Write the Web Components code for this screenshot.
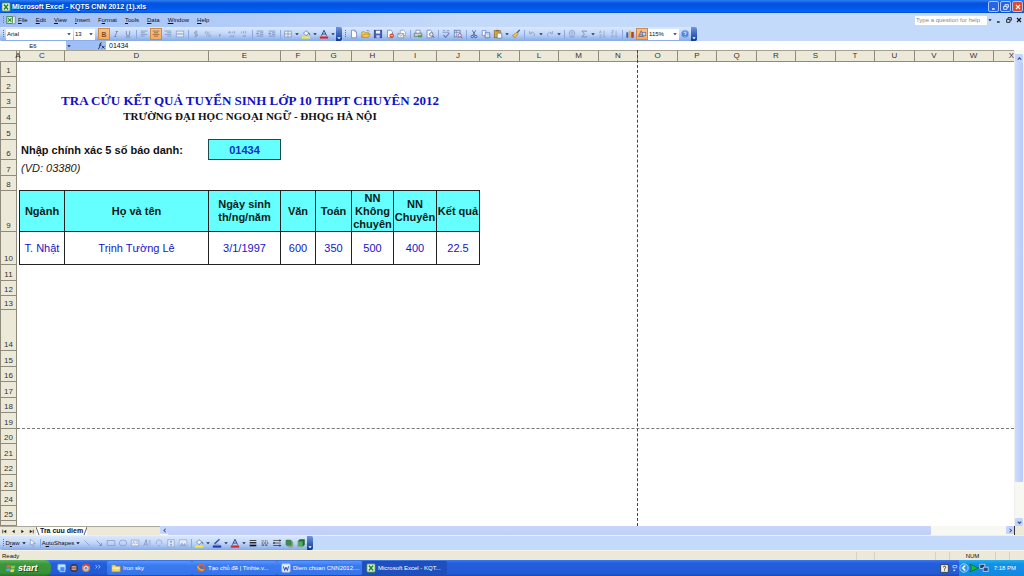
<!DOCTYPE html>
<html lang="vi">
<head>
<meta charset="utf-8">
<title>Microsoft Excel - KQTS CNN 2012 (1).xls</title>
<style>
  html, body { margin: 0; height: 100%; }
  body { font-family: "Liberation Sans", Arial, sans-serif; font-size: 6px; color: #111; background: #fff; overflow: hidden; }
</style>
</head>
<body>
<excel-app></excel-app>
<script>
const ICONS = {
  excel: '<rect x="1" y="1" width="10" height="10" rx="1" fill="#e8f3e4" stroke="#2c7a34"/><path d="M3.5 3l5 6M8.500 3l-5 6" stroke="#1b8a2c" stroke-width="1.800"/>',
  book: '<rect x="1" y="2" width="7" height="8" fill="#dff0dc" stroke="#2c7a34"/><path d="M2.500 4l4 4M6.500 4l-4 4" stroke="#1b8a2c" stroke-width="1.300"/><path d="M9 1.500h2v9H8" fill="#fff" stroke="#4a66a8" stroke-width=".8"/>',
  bold: '<text x="6" y="9" text-anchor="middle" font-size="8" font-weight="bold" fill="#7a5426">B</text>',
  italic: '<path d="M5.500 3h3M3.500 9h3M7 3L5 9" stroke="#6f83ad" stroke-width="1"/>',
  underline: '<path d="M4 2.500v3.500q0 2 2 2t2-2V2.500M3 9.700h6" fill="none" stroke="#6f83ad" stroke-width="1"/>',
  left: '<path d="M2 2.500h8M2 4.500h5M2 6.500h8M2 8.500h5" stroke="#7f95c4" stroke-width="1"/>',
  center: '<path d="M2 2.500h8M3.500 4.500h5M2 6.500h8M3.500 8.500h5" stroke="#8a6a45" stroke-width="1"/>',
  right: '<path d="M2 2.500h8M5 4.500h5M2 6.500h8M5 8.500h5" stroke="#7f95c4" stroke-width="1"/>',
  merge: '<rect x="1.500" y="2.500" width="9" height="7" fill="#e6eefb" stroke="#8b9fcb" stroke-width=".9"/><path d="M1.500 6h2.500M8 6h2.500M5 6h2M4.500 5v2M7.500 5v2" stroke="#7088bb" stroke-width=".8"/>',
  dollar: '<path d="M8 3.500H5.500q-1.500 0-1.500 1.200T5.500 6h1q1.500 0 1.500 1.200T6.500 8.500H4M6 2v8" fill="none" stroke="#7d93c2" stroke-width=".9"/>',
  percent: '<circle cx="4" cy="4.500" r="1.400" fill="none" stroke="#8aa0cc" stroke-width=".9"/><circle cx="8" cy="8" r="1.400" fill="none" stroke="#8aa0cc" stroke-width=".9"/><path d="M8 3L4 9.500" stroke="#8aa0cc" stroke-width=".8"/>',
  comma: '<path d="M6 6v1.500L5 9" stroke="#7d93c2" stroke-width="1.300" fill="none"/>',
  incdec: '<path d="M2 4h3M3.500 2.500L2 4l1.500 1.500M7 3v2M9 2.500v3M4 8v2M6 7.500v2.500M8 7.500v2.500" stroke="#8296c4" stroke-width=".9" fill="none"/>',
  decdec: '<path d="M3 3v2M5.500 2.500v3M8 2.500v3M4 8.500h4M6.500 7L8 8.500 6.500 10" stroke="#8296c4" stroke-width=".9" fill="none"/>',
  outdent: '<path d="M2 2.500h8M6 4.500h4M6 6.500h4M2 8.500h8M5 5.500H2M3.500 4L2 5.500 3.500 7" stroke="#7288bb" stroke-width=".9" fill="none"/>',
  indent: '<path d="M2 2.500h8M6 4.500h4M6 6.500h4M2 8.500h8M1.500 5.500h3M3 4l1.500 1.500L3 7" stroke="#7288bb" stroke-width=".9" fill="none"/>',
  borders: '<path d="M2 2.500h8v7H2zM6 2.500v7M2 6h8" stroke="#7e8fb4" stroke-width=".9" fill="#e9f0fc"/>',
  fill: '<path d="M3 5l3-3 3.500 3L6 8z" fill="#f2f5fa" stroke="#55668c" stroke-width=".8"/><path d="M9.500 4.500q1.500 1.500 1 3" stroke="#3b5fae" fill="none"/><path d="M1 9h10v2.500H1z" fill="#f5ee2e"/>',
  line: '<path d="M3 7L9 1.500" stroke="#2c56b4" stroke-width="1.800"/><path d="M2 7.500h7" stroke="#7b8db8" stroke-width=".8"/><path d="M1 9h10v2.500H1z" fill="#1838b0"/>',
  fontcolor: '<path d="M3 8l3-6.500L9 8M4 6h4" fill="none" stroke="#3a4f8c" stroke-width="1.200"/><path d="M1 9h10v2.500H1z" fill="#e0211c"/>',
  newdoc: '<path d="M3 1.500h4l2 2v7H3z" fill="#fff" stroke="#6d80ad" stroke-width=".9"/><path d="M7 1.500v2h2" fill="none" stroke="#6d80ad" stroke-width=".7"/>',
  open: '<path d="M1 10V3.500h3.500l1 1H9V6" fill="#f7dd76" stroke="#a87e1c" stroke-width=".8"/><path d="M1 10l2-4h8l-2 4z" fill="#f4c844" stroke="#a87e1c" stroke-width=".8"/><path d="M7 2q2-1 3 1" stroke="#3c62b4" fill="none" stroke-width=".8"/>',
  save: '<rect x="1.500" y="1.500" width="9" height="9" fill="#4561ba" stroke="#2a3c86" stroke-width=".8"/><rect x="3.500" y="2" width="5" height="3.500" fill="#eef2fb"/><rect x="4" y="7.500" width="4" height="3" fill="#c8d2ea"/>',
  perm: '<path d="M3 1.500h4l2 2v7H3z" fill="#fff" stroke="#6d80ad" stroke-width=".9"/><circle cx="8" cy="8" r="2.700" fill="#d8442e"/><path d="M6.500 8h3" stroke="#fff"/>',
  mail: '<path d="M4 1.500h4l2 2V8H4z" fill="#fff" stroke="#7d90b8" stroke-width=".8"/><path d="M1 5.500h7v5H1z" fill="#f4f1df" stroke="#7d8398" stroke-width=".8"/><path d="M1 5.500l3.500 3L8 5.500" fill="none" stroke="#7d8398" stroke-width=".7"/>',
  print: '<path d="M3.500 5V1.500h5V5" fill="#fff" stroke="#6d7893" stroke-width=".8"/><path d="M1.500 5h9v4h-9z" fill="#c6ccc8" stroke="#5c6878" stroke-width=".8"/><path d="M6 7.500h5v2.500H6z" fill="#49a04b"/>',
  preview: '<path d="M2.500 1.500h4l2 2v7h-6z" fill="#fff" stroke="#6d80ad" stroke-width=".9"/><circle cx="7.500" cy="6.500" r="2.200" fill="#dcebf8" stroke="#5a6a86" stroke-width=".9"/><path d="M9 8l2 2.500" stroke="#735c3a" stroke-width="1.200"/>',
  spell: '<path d="M2 2h3M7 2h3M2 4h8" stroke="#7e90bd"/><path d="M3 7l2.500 3L10 5" fill="none" stroke="#5f7dc4" stroke-width="1.300"/>',
  research: '<rect x="1.500" y="1.500" width="7" height="8" fill="#dfe6f7" stroke="#6074b0" stroke-width=".9"/><path d="M4 1.500v8M1.500 4h7" stroke="#6074b0" stroke-width=".7"/><circle cx="8" cy="7.500" r="2" fill="#f3e9e9" stroke="#84507a" stroke-width=".9"/><path d="M9.500 9l1.500 2" stroke="#84507a"/>',
  cut: '<path d="M4 1.500L7.500 8M8 1.500L4.500 8" stroke="#4e6296" stroke-width="1"/><circle cx="4" cy="9" r="1.500" fill="none" stroke="#3257ad" stroke-width="1"/><circle cx="8" cy="9" r="1.500" fill="none" stroke="#3257ad" stroke-width="1"/>',
  copy: '<path d="M1.500 2h4.500v6H1.500z" fill="#fff" stroke="#6480bd" stroke-width=".9"/><path d="M5 4.500h5.500v6H5z" fill="#eef4ff" stroke="#4966ab" stroke-width=".9"/><path d="M6.500 6.500h3M6.500 8.500h3" stroke="#7c94ca" stroke-width=".6"/>',
  paste: '<rect x="1.500" y="2" width="7.500" height="8.500" fill="#dba53d" stroke="#86621f" stroke-width=".8"/><rect x="3.500" y="1" width="3.500" height="2" fill="#87724a"/><path d="M5 5h5.500v6H5z" fill="#fff" stroke="#53689e" stroke-width=".8"/>',
  painter: '<path d="M10.500 1L7 5" stroke="#3b5ba4" stroke-width="1.600"/><path d="M7 4l1.500 1.500L5 10.500 1.500 8z" fill="#efc64e" stroke="#94742a" stroke-width=".7"/>',
  undo: '<path d="M3 5.500q4-3.500 6 0 .5 2-1 3.500M3 2.500v3h3" fill="none" stroke="#93a9d6" stroke-width="1.100"/>',
  redo: '<path d="M9 5.500q-4-3.500-6 0-.5 2 1 3.500M9 2.500v3H6" fill="none" stroke="#93a9d6" stroke-width="1.100"/>',
  link: '<circle cx="6" cy="5" r="3.500" fill="#c0d1ef" stroke="#8fa4d0" stroke-width=".9"/><path d="M3 9.500h6" stroke="#8fa4d0" stroke-width="1.500"/><path d="M2.500 5h7M6 1.500v7" stroke="#8fa4d0" stroke-width=".6"/>',
  sigma: '<path d="M9 3.500V2.500H3.500L6.500 6 3.500 9.500H9V8.500" fill="none" stroke="#7187b8" stroke-width="1"/>',
  sorta: '<path d="M3 5l1-3 1 3M3 7h2.500L3 10h2.500M8.500 2v8M7 8.500L8.500 10 10 8.500" fill="none" stroke="#8da2cf" stroke-width=".9"/>',
  sortz: '<path d="M3 2h2.500L3 5h2.500M3 10l1-3 1 3M8.500 2v8M7 8.500L8.500 10 10 8.500" fill="none" stroke="#8da2cf" stroke-width=".9"/>',
  chart: '<path d="M1.500 4h2.500v6.500H1.500z" fill="#3764bf"/><path d="M4.500 2h2.500v8.500H4.500z" fill="#e7b43a"/><path d="M7.500 3.500h3v7h-3z" fill="#b33d33"/>',
  drawing: '<path d="M2 9l3-7 3 7zM3 7h4" fill="none" stroke="#5a6ca3" stroke-width="1"/><rect x="6.500" y="4" width="4" height="4" fill="#c9d7f4" stroke="#6674a6" stroke-width=".8"/>',
  help: '<circle cx="6" cy="6" r="4.500" fill="#4f82dd" stroke="#8fb1ee"/><path d="M4.700 5q0-1.500 1.300-1.500T7.300 5 6 6.500v.8M6 8.300v.8" fill="none" stroke="#fff" stroke-width="1"/>',
  fx: '<path d="M1.500 10.500q1.500 0 2-3l.8-3.500q.5-2 2-1.800M3 5.500h3M6.500 6.500L10 10M10 6.500L6.500 10" fill="none" stroke="#13244f" stroke-width="1.200"/>',
  pointer: '<path d="M4 1.500v7.500l2-2 1.500 3.500 1.200-.6L7.300 6.500H10z" fill="#f4f7fd" stroke="#7185b4" stroke-width=".7"/>',
  sline: '<path d="M3 3l6 6" stroke="#8599c6" stroke-width=".9"/>',
  arrow: '<path d="M3 3l6 6M9 6v3H6" fill="none" stroke="#7286b8" stroke-width=".9"/>',
  rect: '<path d="M1.500 3h9v6h-9z" fill="none" stroke="#8599c6" stroke-width=".9"/>',
  oval: '<ellipse cx="6" cy="6" rx="4.500" ry="3.500" fill="none" stroke="#8599c6" stroke-width=".9"/>',
  textbox: '<path d="M1.500 2.500h9v7h-9z" fill="#e8effb" stroke="#8599c6" stroke-width=".8"/><path d="M3 7.500l1.500-3.500L6 7.500M7 4.500h2.500M7 6.500h2.500" fill="none" stroke="#8599c6" stroke-width=".7"/>',
  wordart: '<path d="M2 10l3-8 1.500 8M3 7.500h3" fill="none" stroke="#8da0ca" stroke-width="1.200"/><path d="M8 2l2.500 1v7L8 9z" fill="#a9bce2"/>',
  diagram: '<circle cx="6" cy="6" r="3.500" fill="none" stroke="#92a7d4"/><circle cx="6" cy="2.500" r="1.500" fill="#b8c9ea"/><circle cx="3" cy="8.500" r="1.500" fill="#b8c9ea"/><circle cx="9" cy="8.500" r="1.500" fill="#b8c9ea"/>',
  clipart: '<path d="M2 2h8v8.500H2z" fill="#dce6f8" stroke="#8da2d0" stroke-width=".8"/><circle cx="6" cy="4.500" r="1.300" fill="#8da2d0"/><path d="M4 9q2-4 4 0z" fill="#8da2d0"/>',
  pic: '<path d="M1.500 2h9v8h-9z" fill="#e0eafa" stroke="#8fa4d2" stroke-width=".8"/><path d="M2 9.500l2.500-4 2 2.500L8 6l2.500 3.500z" fill="#96aad6"/>',
  weight: '<path d="M2 3h8" stroke="#111" stroke-width=".9"/><path d="M2 5.700h8" stroke="#111" stroke-width="1.500"/><path d="M2 9h8" stroke="#111" stroke-width="2"/>',
  dash: '<path d="M2 3.500h8" stroke="#222" stroke-dasharray="1 1"/><path d="M2 6h8" stroke="#222" stroke-dasharray="2 1"/><path d="M2 8.500h8" stroke="#222" stroke-dasharray="3 1"/>',
  arrows: '<path d="M1.500 3h9M1.500 6h9M1.500 9h9" stroke="#222" stroke-width=".8"/><path d="M9 1.500L11 3 9 4.500M3 4.500L1 6l2 1.500M9 7.500L11 9 9 10.500" fill="#222"/>',
  shadow: '<rect x="4" y="4" width="7" height="7" rx="1" fill="#8b9b8c"/><rect x="2" y="2" width="7" height="7" rx="1" fill="#3a8a4c"/>',
  threed: '<path d="M2 4l2.500-2.500h6V8L8 10.500z" fill="#1f6a31"/><path d="M2 4h6v6.500H2z" fill="#57a863"/>',
  min: '<path d="M3 9h4" stroke="currentColor" stroke-width="2"/>',
  restore: '<path d="M4.500 4.500V2.500h5v4H8M2.500 5h5v4.500h-5z" fill="none" stroke="currentColor" stroke-width="1.300"/>',
  close: '<path d="M3 3l6 6M9 3L3 9" stroke="currentColor" stroke-width="1.600"/>',
  down: '<path d="M2.500 4.500h7L6 8.500z" fill="currentColor"/>',
  chevup: '<path d="M3 8l3-3 3 3" fill="none" stroke="#34508f" stroke-width="2"/>',
  chevdown: '<path d="M3 4.500l3 3 3-3" fill="none" stroke="#34508f" stroke-width="2"/>',
  chevleft: '<path d="M8 3L5 6l3 3" fill="none" stroke="#34508f" stroke-width="1.800"/>',
  chevright: '<path d="M4.500 3l3 3-3 3" fill="none" stroke="#34508f" stroke-width="1.800"/>',
  first: '<path d="M3 3v6" stroke="#222" stroke-width="1.400"/><path d="M9 3v6L4.500 6z" fill="#222"/>',
  prev: '<path d="M8 3v6L3.500 6z" fill="#222"/>',
  next: '<path d="M4 3v6l4.500-3z" fill="#222"/>',
  last: '<path d="M9 3v6" stroke="#222" stroke-width="1.400"/><path d="M3 3v6l4.500-3z" fill="#222"/>',
  windows: '<path d="M1 3q2-1.500 4.500-.3L5 6Q3 5 .500 6z" fill="#f0603a"/><path d="M6.300 3q2 1 4.700 0L10.300 6.200Q8 7 5.700 6.200z" fill="#86cf4a"/><path d="M.500 7Q3 6 5 7l-.6 3.200Q2 9 0 10z" fill="#5aa0f4"/><path d="M5.600 7.200q2.300 1 4.500 0L9.400 10.500q-2.200 1-4.400-.1z" fill="#fbcf3f"/>',
  ie: '<rect x="1" y="1.500" width="9" height="7" rx="1" fill="#cfe4ff" stroke="#6fb0f5"/><path d="M3.500 4.500h6v6h-6z" fill="#3f8ef0" stroke="#d8ebff" stroke-width=".8"/>',
  media: '<circle cx="6" cy="6" r="4.800" fill="#34384a"/><circle cx="6" cy="6" r="3" fill="#b85c3a"/><path d="M3 4.500h6M3 7.500h6" stroke="#c7d3e6" stroke-width=".9"/>',
  chrome: '<circle cx="6" cy="6" r="4.800" fill="#d98a5a"/><path d="M2 3.500q4-3.500 8 0" stroke="#d2492c" stroke-width="2" fill="none"/><circle cx="6" cy="6.300" r="2.300" fill="#5f8fe0" stroke="#f4f6fb"/>',
  fox: '<circle cx="6" cy="6" r="4.800" fill="#d9682a"/><circle cx="6.500" cy="5.500" r="2.600" fill="#5b6fae"/><path d="M2 4q2 5 7 4.500" stroke="#f6b23c" stroke-width="1.600" fill="none"/>',
  more: '<path d="M3 2.500l2 2-2 2M6.500 2.500l2 2-2 2" fill="none" stroke="#d7e6ff" stroke-width=".9"/>',
  folder: '<path d="M1 2.500h4l1 1.500h5v6.500H1z" fill="#f6d766" stroke="#c39a2d" stroke-width=".8"/><path d="M1.500 6h9" stroke="#fff3b8" stroke-width="1.500"/>',
  word: '<rect x="1" y="1" width="10" height="10" rx="1" fill="#e8effc" stroke="#9ab4ea"/><path d="M3 4l1.300 5L6 5l1.700 4L9 4" fill="none" stroke="#2350b4" stroke-width="1.200"/>',
  ask: '<rect x="1" y="1" width="10" height="10" fill="#f5f0dc" stroke="#333"/><path d="M4.500 4.500Q4.500 3 6 3t1.500 1.500T6 6.500v1M6 8.500v1" fill="none" stroke="#222" stroke-width="1.100"/>',
  dots: '<path d="M4 2h5v3H4z" fill="none" stroke="#cfe2ff"/><path d="M4.500 8.500h2.500" stroke="#cfe2ff" stroke-width="2"/>',
  back: '<circle cx="6" cy="6" r="5" fill="#2f93ee" stroke="#a9d8ff"/><path d="M7.500 3L4.500 6l3 3" fill="none" stroke="#fff" stroke-width="1.800"/>',
  play: '<path d="M1 1.500L11.500 6 1 10.500 3 6z" fill="#12c428" stroke="#0b5a1c" stroke-width=".8"/>',
  net: '<rect x="1" y="1.500" width="6" height="5" fill="#22386e" stroke="#cfe0f8" stroke-width=".9"/><rect x="5" y="5" width="6" height="5" fill="#2d4a88" stroke="#cfe0f8" stroke-width=".9"/>',
};

const define = (name, css, html) => customElements.define(name, class extends HTMLElement {
  connectedCallback() {
    if (this.shadowRoot) return;
    const root = this.attachShadow({ mode: 'open' });
    root.innerHTML = `<style>*{box-sizing:border-box}${css}</style>` +
      (typeof html === 'function' ? html(this) : html);
  }
});

define('ui-icon', `
  :host { display: block; width: var(--icon, 10px); height: var(--icon, 10px); flex: none; }
  svg { display: block; width: 100%; height: 100%; }`,
  el => `<svg viewBox="0 0 12 12" aria-hidden="true">${ICONS[el.getAttribute('name')]}</svg>`);

define('tool-button', `
  :host { display: block; width: 12px; height: 12px; flex: none; }
  button { width: 100%; height: 100%; padding: 0; border: 1px solid transparent; background: none; font: inherit; color: inherit; white-space: nowrap;
           display: flex; align-items: center; justify-content: center; gap: 1px; }
  :host([pressed]) button { background: linear-gradient(#fdc088, #f6a95c); border-color: #c98a4c; }`,
  el => el.hasAttribute('icon')
    ? `<button aria-label="${el.getAttribute('icon')}"><ui-icon name="${el.getAttribute('icon')}"></ui-icon></button>`
    : '<button><span><slot></slot></span><slot name="after"></slot></button>');

define('drop-arrow', `
  :host { display: block; width: 6px; flex: none; color: #1c2c5c; --icon: 6px; }
  button { width: 100%; height: 12px; padding: 0; border: 0; background: none; display: flex; align-items: center; justify-content: center; color: inherit; }`,
  '<button aria-label="More"><ui-icon name="down"></ui-icon></button>');

define('tool-grip', `
  :host { display: flex; justify-content: center; align-items: center; width: 6px; flex: none; }
  i { width: 1px; height: 8px; background: repeating-linear-gradient(#5573b8 0 1px, transparent 1px 2px); }`, '<i></i>');

define('tool-sep', `
  :host { display: flex; justify-content: center; align-items: center; width: 4px; flex: none; }
  i { width: 1px; height: 9px; background: #8aa8df; }`, '<i></i>');

define('tool-cap', `
  :host { display: flex; align-items: flex-end; justify-content: center; width: 6px; align-self: stretch; flex: none; color: #fff; --icon: 6px;
          background: linear-gradient(#6f95e0, #0d3795); border-radius: 0 2px 2px 0; }`, '<ui-icon name="down"></ui-icon>');

define('combo-box', `
  :host { display: flex; align-items: center; height: 11px; background: #fff; flex: none; position: relative; --icon: 6px; color: #1c2c5c; }
  select { appearance: none; flex: 1; min-width: 0; width: 100%; height: 11px; border: 0; padding: 0 7px 0 1px; background: none; font: inherit; color: #111; }
  ui-icon { position: absolute; right: 1px; pointer-events: none; }`,
  el => `<select aria-label="${el.getAttribute('label')}"><option>${el.getAttribute('value')}</option></select><ui-icon name="down"></ui-icon>`);

define('title-bar', `
  :host { display: flex; align-items: center; height: 13px; padding: 0 1px; gap: 1px; color: #fff; font-size: 7px; font-weight: bold; flex: none;
          background: linear-gradient(#2f80f4, #0452dc 25%, #0058ea 60%, #0565fb 90%, #0346c8); }
  h1 { flex: 1; margin: 0; font: inherit; text-shadow: 1px 1px #0a2f8c; white-space: nowrap; }
  button { width: 11px; height: 11px; padding: 0; border: 1px solid #a9c6fa; border-radius: 2px; color: #fff; background: #2a63e0; display: flex; align-items: center; justify-content: center; --icon: 8px; }
  .x { background: #e0492a; }
  nav { display: flex; gap: 1px; }`,
  `<ui-icon name="excel"></ui-icon><h1>Microsoft Excel - KQTS CNN 2012 (1).xls</h1>
   <nav><button aria-label="Minimize"><ui-icon name="min"></ui-icon></button><button aria-label="Restore"><ui-icon name="restore"></ui-icon></button><button class="x" aria-label="Close"><ui-icon name="close"></ui-icon></button></nav>`);

define('menu-bar', `
  :host { display: flex; align-items: center; height: 14px; padding: 0 1px 0 0; background: linear-gradient(90deg, #9ebef5, #c4dafa 45%); flex: none; }
  .menus { display: flex; gap: 8px; margin-left: 2px; flex: 1; }
  button { border: 0; padding: 0; background: none; font: inherit; color: inherit; }
  input { width: 72px; height: 9px; border: 0; padding: 0 1px; font: inherit; background: #fff; }
  input::placeholder { color: #888; }
  .win { display: flex; gap: 2px; --icon: 8px; margin-left: 2px; }`,
  `<tool-grip></tool-grip><ui-icon name="book"></ui-icon>
   <div class="menus">${['<u>F</u>ile', '<u>E</u>dit', '<u>V</u>iew', '<u>I</u>nsert', 'F<u>o</u>rmat', '<u>T</u>ools', '<u>D</u>ata', '<u>W</u>indow', '<u>H</u>elp'].map(m => `<button>${m}</button>`).join('')}</div>
   <input aria-label="Help search" placeholder="Type a question for help"><drop-arrow></drop-arrow>
   <div class="win"><button aria-label="Minimize"><ui-icon name="min"></ui-icon></button><button aria-label="Restore"><ui-icon name="restore"></ui-icon></button><button aria-label="Close"><ui-icon name="close"></ui-icon></button></div>`);

const A = '<drop-arrow></drop-arrow>', S = '<tool-sep></tool-sep>', G = '<tool-grip></tool-grip>', CAP = '<tool-cap></tool-cap>';
const t = (...names) => names.map(n => `<tool-button icon="${n}"></tool-button>`).join('');
const on = n => `<tool-button pressed icon="${n}"></tool-button>`;

define('tool-bar', `
  :host { display: flex; height: 14px; background: #c4dafa; flex: none; }
  div { display: flex; align-items: center; background: linear-gradient(#dbe8fd, #c0d6f8 50%, #86a9e6); border-radius: 2px; }
  .font { width: 67px; margin-right: 1px; } .size { width: 21px; margin-right: 3px; } .zoom { width: 31px; }`,
  `<div>${G}<combo-box class="font" label="Font" value="Arial"></combo-box><combo-box class="size" label="Font size" value="13"></combo-box>
   ${on('bold')}${t('italic', 'underline')}${S}${t('left')}${on('center')}${t('right', 'merge')}${S}${t('dollar', 'percent', 'comma', 'incdec', 'decdec')}${S}${t('outdent', 'indent')}${S}${t('borders')}${A}${t('fill')}${A}${t('fontcolor')}${A}${CAP}</div>
   <div>${G}${t('newdoc', 'open', 'save', 'perm', 'mail')}${S}${t('print', 'preview')}${S}${t('spell', 'research')}${S}${t('cut', 'copy', 'paste')}${A}${t('painter')}${S}${t('undo')}${A}${t('redo')}${A}${S}${t('link', 'sigma')}${A}${t('sorta', 'sortz')}${S}${t('chart')}${on('drawing')}<combo-box class="zoom" label="Zoom" value="115%"></combo-box>${t('help')}${CAP}</div>`);

define('formula-bar', `
  :host { display: flex; height: 9px; background: #9ebef5; flex: none; }
  input { border: 0; padding: 0; height: 9px; font: inherit; background: #fff; color: #111; }
  .name { width: 66px; text-align: center; }
  .value { flex: 1; min-width: 0; padding-left: 3px; font-size: 7px; }
  span { flex: 1; } div { width: 40px; display: flex; align-items: center; --icon: 9px; }`,
  `<input class="name" aria-label="Name box" value="E6"><div><drop-arrow></drop-arrow><span></span><ui-icon name="fx"></ui-icon></div><input class="value" aria-label="Formula" value="01434">`);

const COLS = ['A', 3, 'C', 45, 'D', 144, 'E', 72, 'F', 35, 'G', 36, 'H', 42, 'I', 43, 'J', 43, 'K', 40, 'L', 39, 'M', 40, 'N', 39, 'O', 40, 'P', 39, 'Q', 40, 'R', 39, 'S', 40, 'T', 39, 'U', 40, 'V', 39, 'W', 40];
const letters = [...COLS.filter((_, i) => i % 2 === 0), 'X'], widths = COLS.filter((_, i) => i % 2);
const ROWS = [15, 16, 15, 16, 16, 20, 16, 15, 41, 33, 16, 15, 14, 41, 16, 15, 16, 15, 16, 15, 16, 15, 16, 15, 15];

define('result-table', `
  :host { display: block; margin: -1px 0 0 -1px; }
  table { width: 100%; table-layout: fixed; border-spacing: 0; border: solid #222; border-width: 1px 0 0 1px; text-align: center; font-size: 11px; line-height: 13px; }
  th, td { padding: 0; border: solid #222; border-width: 0 1px 1px 0; }
  th { height: 41px; background: #66ffff; color: #0b1a1a; }
  td { height: 33px; color: #1414c8; }`,
  () => `<table><colgroup>${widths.slice(1, 9).map(w => `<col style="width:${w}px">`).join('')}</colgroup>
   <thead><tr><th>Ngành</th><th>Họ và tên</th><th>Ngày sinh th/ng/năm</th><th>Văn</th><th>Toán</th><th>NN Không chuyên</th><th>NN<br>Chuyên</th><th>Kết quả</th></tr></thead>
   <tbody><tr><td>T. Nhật</td><td>Trịnh Tường Lê</td><td>3/1/1997</td><td>600</td><td>350</td><td>500</td><td>400</td><td>22.5</td></tr></tbody></table>`);

define('work-sheet', `
  :host { display: grid; min-width: 0; min-height: 0; overflow: hidden; background: #fff;
          grid-template-columns: 17px ${widths.map(w => w + 'px').join(' ')} minmax(0, 1fr);
          grid-template-rows: 12px ${ROWS.map(r => r + 'px').join(' ')} 1fr; }
  .col, .row, .corner { background: #ece9d8; border: solid #8f8b7c; border-width: 0 1px 1px 0; color: #333; font-size: 8px; line-height: 10px; }
  .col, .corner { border-top: 1px solid #a5a294; grid-row: 1; }
  .col { display: flex; justify-content: center; }
  .first { z-index: 1; }
  .last { justify-content: flex-end; border-right: 0; }
  .row { display: flex; align-items: flex-end; justify-content: center; grid-column: 1; border-left: 1px solid #8f8b7c; }
  h2, h3, p, label { margin: 0; align-self: center; white-space: nowrap; font-size: 11px; line-height: 13px; }
  h2, h3 { font-family: "Liberation Serif", "Times New Roman", serif; text-align: center; grid-column: 3 / 11; }
  h2 { grid-row: 4; font-size: 13px; color: #1010c8; } h3 { grid-row: 5; color: #111; }
  label { grid-area: 7 / 3 / 8 / 5; font-weight: bold; padding-left: 1px; }
  p { grid-area: 8 / 3 / 9 / 5; font-style: italic; padding-left: 1px; color: #222; }
  input { grid-area: 7 / 5; margin: -1px 0 0 -1px; min-width: 0; border: 1px solid #1d4a4a; padding: 0; background: #66ffff; color: #0a32c8; text-align: center; font: bold 11px "Liberation Sans", Arial, sans-serif; }
  result-table { grid-area: 10 / 3 / 12 / 11; }
  .vbreak { grid-area: 1 / 2 / -1 / 15; border-right: 1px dashed #444; }
  .hbreak { grid-area: 2 / 2 / 21 / -1; border-bottom: 1px dashed #777; }
  .vbreak, .hbreak { pointer-events: none; }`,
  () => `<div class="corner"></div>${letters.map((l, i) => `<div class="col${i === 0 ? ' first' : i === letters.length - 1 ? ' last' : ''}" style="grid-column:${i + 2}">${l}</div>`).join('')}
   ${[...ROWS, 0].map((_, i) => `<div class="row" style="grid-row:${i + 2}">${i < ROWS.length ? i + 1 : ''}</div>`).join('')}
   <div class="vbreak"></div><div class="hbreak"></div>
   <h2>TRA CỨU KẾT QUẢ TUYỂN SINH LỚP 10 THPT CHUYÊN 2012</h2>
   <h3>TRƯỜNG ĐẠI HỌC NGOẠI NGỮ - ĐHQG HÀ NỘI</h3>
   <label for="sbd">Nhập chính xác 5 số báo danh:</label><input id="sbd" value="01434">
   <p>(VD: 03380)</p>
   <result-table></result-table>`);

define('scroll-bar', `
  :host { display: flex; min-width: 0; min-height: 0; background: #f8f8f2; --icon: 7px; }
  :host([vertical]) { flex-direction: column; padding-top: 4px; border-left: 1px solid #eee; }
  button { border: 0; padding: 0; flex: none; width: 8px; height: 8px; border-radius: 1px; background: #c5d4fb; display: flex; align-items: center; justify-content: center; }
  .track { flex: 1; display: grid; }
  :host([vertical]) .track { grid-template-rows: 92fr 8fr; margin-right: 1px; }
  :host(:not([vertical])) .track { grid-template-columns: 91fr 9fr; }
  .thumb { background: linear-gradient(#c9d5fb, #c0cef8); border-radius: 1px; }
  :host([vertical]) .thumb { background: linear-gradient(90deg, #cfdcff, #b9cafa); }`,
  el => { const v = el.hasAttribute('vertical');
    return `<button aria-label="Back"><ui-icon name="${v ? 'chevup' : 'chevleft'}"></ui-icon></button><div class="track"><div class="thumb"></div></div><button aria-label="Forward"><ui-icon name="${v ? 'chevdown' : 'chevright'}"></ui-icon></button>`; });

define('sheet-tabs', `
  :host { display: flex; height: 9px; background: #ece9d8; flex: none; }
  nav { display: flex; align-items: center; width: 160px; border-top: 1px solid #aaa69a; --icon: 7px; }
  nav button { border: 0; padding: 0; background: none; width: 9px; display: flex; justify-content: center; }
  a { display: flex; align-items: center; background: #fff; color: #111; text-decoration: none; font-size: 7px; font-weight: bold; line-height: 8px; }
  svg { width: 4px; height: 8px; display: block; }
  scroll-bar { flex: 1; } .end { width: 10px; border-left: 1px solid #333; }`,
  `<nav>${['first', 'prev', 'next', 'last'].map(n => `<button aria-label="${n} sheet"><ui-icon name="${n}"></ui-icon></button>`).join('')}
   <a href="#sheet"><svg viewBox="0 0 4 8"><path d="M0 0l3 8" stroke="#333" stroke-width=".8"/></svg>Tra cuu diem<svg viewBox="0 0 4 8"><path d="M4 0L1 8" stroke="#333" stroke-width=".8"/></svg></a></nav>
   <scroll-bar></scroll-bar><div class="end"></div>`);

define('draw-bar', `
  :host { display: flex; height: 15px; background: #c4dafa; flex: none; border-top: 1px solid #e8f0fc; }
  div { display: flex; align-items: center; background: linear-gradient(#dbe8fd, #c0d6f8 50%, #86a9e6); border-radius: 2px; }
  .draw { width: 20px; } .shapes { width: 39px; } ui-icon { --icon: 6px; }`,
  `<div>${G}<tool-button class="draw">D<u>r</u>aw<ui-icon slot="after" name="down"></ui-icon></tool-button>${t('pointer')}${S}<tool-button class="shapes">A<u>u</u>toShapes<ui-icon slot="after" name="down"></ui-icon></tool-button>${t('sline', 'arrow', 'rect', 'oval', 'textbox', 'wordart', 'diagram', 'clipart', 'pic')}${S}${t('fill')}${A}${t('line')}${A}${t('fontcolor')}${A}${t('weight', 'dash', 'arrows', 'shadow', 'threed')}${CAP}</div>`);

define('status-bar', `
  :host { display: flex; height: 10px; align-items: center; padding: 0 1px 0 2px; background: #ece9d8; flex: none; border-top: 1px solid #f6f4ea; }
  span { flex: 1; } i { font-style: normal; height: 8px; line-height: 8px; border: solid #d6d2c0; border-width: 0 0 0 1px; text-align: center; width: 14px; }
  .wide { width: 61px; } .num { width: 46px; } .mid { width: 18px; }`,
  `<span>Ready</span><i class="mid"></i><i class="wide"></i><i></i><i class="num">NUM</i><i></i><i></i>`);

define('task-button', `
  :host { display: block; width: 85px; height: 14px; min-width: 0; }
  button { width: 100%; height: 100%; padding: 0 4px; border: 0; border-radius: 2px; font: inherit; color: #fff; text-align: left; background: linear-gradient(#5a97fa, #3a7bf0 30%, #3773ea);
           display: flex; align-items: center; gap: 2px; white-space: nowrap; overflow: hidden; }
  :host([active]) button { background: #1e4fbc; }`,
  el => `<button><ui-icon name="${el.getAttribute('icon')}"></ui-icon><slot></slot></button>`);

define('task-bar', `
  :host { display: flex; align-items: center; height: 16px; flex: none; color: #fff; background: linear-gradient(#3a7af0, #245edb 20%, #2259d6 85%, #1c48b0); }
  .start { width: 51px; height: 16px; padding: 0 0 0 6px; border: 0; border-radius: 0 6px 6px 0; color: #fff; font: italic bold 9px "Liberation Sans", Arial, sans-serif; text-shadow: 1px 1px #1c4a1c;
           background: linear-gradient(#5cb65c, #3c963c 25%, #37923a 80%, #2a732c); display: flex; align-items: center; gap: 2px; }
  .quick { display: flex; align-items: center; gap: 2px; padding: 0 4px 0 6px; }
  .tasks { flex: 1; display: flex; min-width: 0; }
  .tray { display: flex; align-items: center; gap: 1px; --icon: 9px; }
  .clock { display: flex; align-items: center; align-self: stretch; padding: 0 8px 0 0; background: linear-gradient(#26b0f2, #1290e8 25%, #1188e0); }
  time { margin-left: 5px; }`,
  `<button class="start"><ui-icon name="windows"></ui-icon>start</button>
   <div class="quick"><ui-icon name="ie"></ui-icon><ui-icon name="media"></ui-icon><ui-icon name="chrome"></ui-icon><ui-icon name="more"></ui-icon></div>
   <div class="tasks"><task-button icon="folder">Iron sky</task-button><task-button icon="fox">Tạo chủ đề | Tinhte.v...</task-button><task-button icon="word">Diem chuan CNN2012....</task-button><task-button active icon="excel">Microsoft Excel - KQT...</task-button></div>
   <div class="tray"><ui-icon name="ask"></ui-icon><ui-icon name="dots"></ui-icon></div>
   <div class="clock"><ui-icon name="back"></ui-icon><ui-icon name="play"></ui-icon><ui-icon name="net"></ui-icon><time>7:18 PM</time></div>`);

define('excel-app', `
  :host { display: flex; flex-direction: column; height: 100vh; }
  main { flex: 1; min-height: 0; display: grid; grid-template-columns: minmax(0, 1fr) 10px; }`,
  `<title-bar></title-bar><menu-bar></menu-bar><tool-bar></tool-bar><formula-bar></formula-bar>
   <main><work-sheet></work-sheet><scroll-bar vertical></scroll-bar></main>
   <sheet-tabs></sheet-tabs><draw-bar></draw-bar><status-bar></status-bar><task-bar></task-bar>`);
</script>
</body>
</html>
